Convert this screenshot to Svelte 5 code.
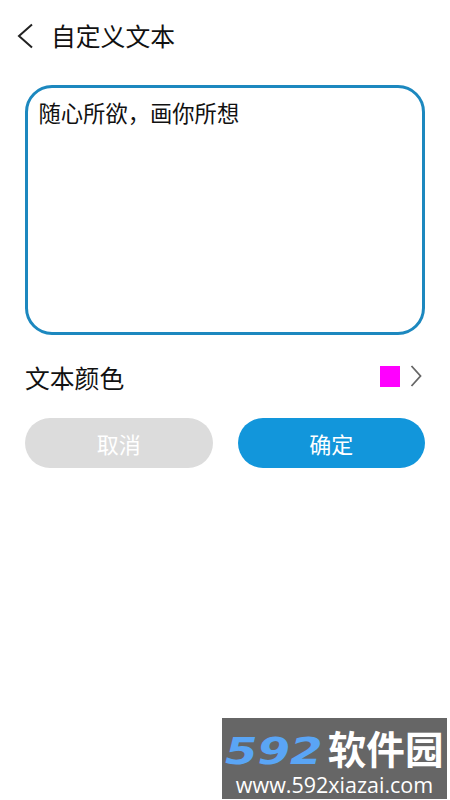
<script>
    let text = '随心所欲，画你所想';
</script>

<div class="page">
    <header class="top">
        <svg class="back" width="16" height="26" viewBox="0 0 16 26">
            <path d="M15 1.5 L2 13 L15 24.5" fill="none" stroke="#222" stroke-width="2" />
        </svg>
        <h1>自定义文本</h1>
    </header>

    <div class="editor">{text}</div>

    <div class="color-row">
        <span class="label">文本颜色</span>
        <span class="swatch"></span>
        <svg class="more" width="12" height="22" viewBox="0 0 12 22">
            <path d="M1.5 1 L10.5 11 L1.5 21" fill="none" stroke="#666" stroke-width="1.8" />
        </svg>
    </div>

    <div class="actions">
        <button class="cancel">取消</button>
        <button class="ok">确定</button>
    </div>

    <div class="watermark">
        <div class="brand"><span class="num">592</span><span class="cn">软件园</span></div>
        <div class="url">www.592xiazai.com</div>
    </div>
</div>

<style>
    :global(body) {
        margin: 0;
        background: #fff;
    }

    .page {
        position: relative;
        height: 800px;
        overflow: hidden;
        padding: 0 25px;
        box-sizing: border-box;
        font-family: "Noto Sans CJK SC", "Liberation Sans", sans-serif;
        color: #111;
    }

    .top {
        display: flex;
        align-items: center;
        height: 71px;
        margin-left: -8px;
    }

    .back {
        margin-right: 18px;
    }

    h1 {
        margin: 0;
        font-size: 24.8px;
        font-weight: 400;
        line-height: 1;
    }

    .editor {
        box-sizing: border-box;
        height: 250px;
        margin-top: 14px;
        padding: 9px 10.5px;
        border: 3px solid #1c88bf;
        border-radius: 27px;
        font-size: 22.3px;
        line-height: 30px;
    }

    .color-row {
        display: flex;
        align-items: center;
        height: 83px;
    }

    .label {
        flex: 1;
        font-size: 24.8px;
    }

    .swatch {
        width: 20px;
        height: 21px;
        margin-bottom: 1px;
        background: #ff00ff;
    }

    .more {
        margin: 0 3px 1px 10px;
    }

    .actions {
        display: flex;
        gap: 25px;
    }

    button {
        flex: 1;
        height: 50px;
        padding: 0;
        border: none;
        border-radius: 25px;
        color: #fff;
        font-family: inherit;
        font-size: 22px;
    }

    .cancel {
        background: #dcdcdc;
    }

    .ok {
        background: #1296db;
    }

    .watermark {
        position: absolute;
        left: 222px;
        top: 718px;
        width: 225px;
        height: 81px;
        background: #666;
        color: #fff;
        text-align: center;
    }

    .brand {
        display: flex;
        align-items: center;
        justify-content: center;
        height: 40px;
        margin-top: 13px;
    }

    .num {
        display: inline-block;
        margin-right: 23px;
        color: #5aa5f5;
        font-family: "DejaVu Sans", sans-serif;
        font-size: 38px;
        font-weight: 700;
        font-style: italic;
        line-height: 1;
        transform: scaleX(1.23);
        transform-origin: left center;
    }

    .cn {
        font-family: "Liberation Sans", "Noto Sans CJK SC", sans-serif;
        font-size: 38.6px;
        font-weight: 700;
        line-height: 1;
    }

    .url {
        font-family: "Open Sans", sans-serif;
        font-size: 21.5px;
        line-height: 28px;
    }
</style>
